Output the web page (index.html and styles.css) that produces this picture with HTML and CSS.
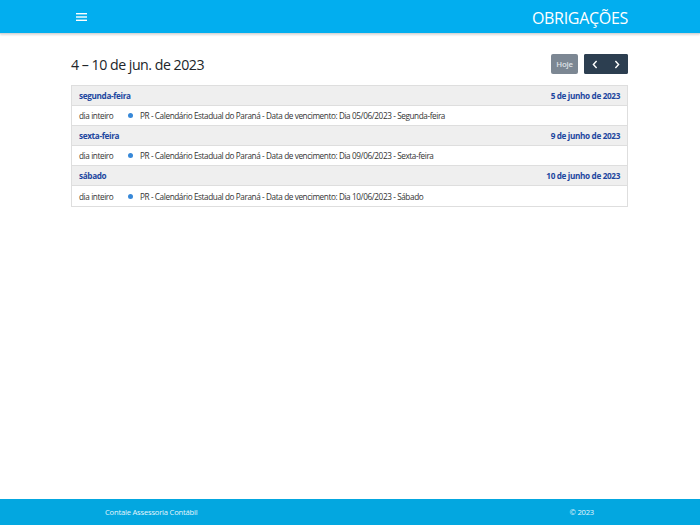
FILE: index.html
```html
<!DOCTYPE html>
<html lang="pt-BR">
<head>
<meta charset="utf-8">
<link rel="stylesheet" href="styles.css">
</head>
<body>
<header class="topbar">
  <div class="topbar-inner">
    <button class="menu-btn" aria-label="menu">
      <svg width="11" height="8" viewBox="0 0 11 8"><rect x="0" y="0" width="11" height="1.4" fill="#fff"/><rect x="0" y="3.3" width="11" height="1.4" fill="#fff"/><rect x="0" y="6.6" width="11" height="1.4" fill="#fff"/></svg>
    </button>
    <div class="brand">OBRIGAÇÕES</div>
  </div>
</header>
<main class="content">
  <div class="toolbar">
    <h2 class="range">4 – 10 de jun. de 2023</h2>
    <div class="actions">
      <button class="btn btn-today">Hoje</button>
      <div class="btn-group">
        <button class="btn btn-nav"><svg width="6" height="9" viewBox="0 0 6 9"><path d="M4.6 1 L1.4 4.5 L4.6 8" fill="none" stroke="#fff" stroke-width="1.4"/></svg></button>
        <button class="btn btn-nav"><svg width="6" height="9" viewBox="0 0 6 9"><path d="M1.4 1 L4.6 4.5 L1.4 8" fill="none" stroke="#fff" stroke-width="1.4"/></svg></button>
      </div>
    </div>
  </div>
  <div class="list">
    <div class="day-row"><span>segunda-feira</span><span>5 de junho de 2023</span></div>
    <div class="event-row"><span class="time">dia inteiro</span><span class="dot"></span><span class="title">PR - Calendário Estadual do Paraná - Data de vencimento: Dia 05/06/2023 - Segunda-feira</span></div>
    <div class="day-row"><span>sexta-feira</span><span>9 de junho de 2023</span></div>
    <div class="event-row"><span class="time">dia inteiro</span><span class="dot"></span><span class="title">PR - Calendário Estadual do Paraná - Data de vencimento: Dia 09/06/2023 - Sexta-feira</span></div>
    <div class="day-row"><span>sábado</span><span>10 de junho de 2023</span></div>
    <div class="event-row"><span class="time">dia inteiro</span><span class="dot"></span><span class="title">PR - Calendário Estadual do Paraná - Data de vencimento: Dia 10/06/2023 - Sábado</span></div>
  </div>
</main>
<footer class="footer">
  <div class="footer-inner">
    <span>Contale Assessoria Contábil</span>
    <span>© 2023</span>
  </div>
</footer>
</body>
</html>
```
FILE: styles.css
```css
* { box-sizing: border-box; }
html, body { margin: 0; padding: 0; height: 100%; }
body {
  font-family: "Open Sans", "Noto Sans", sans-serif;
  color: #212529;
  background: #fff;
  display: flex;
  flex-direction: column;
  min-height: 525px;
}
.topbar {
  background: #02aeef;
  height: 34px;
  border-bottom: 1px solid #d6d6d6;
  box-shadow: 0 1px 2px rgba(0,0,0,0.15);
}
.topbar-inner {
  height: 33px;
  display: flex;
  align-items: center;
  justify-content: space-between;
  padding: 0 72px 0 76px;
}
.menu-btn {
  background: none;
  border: 0;
  padding: 0;
  display: flex;
  align-items: center;
  height: 10px;
}
.brand {
  color: #fff;
  font-size: 16px;
  letter-spacing: -0.3px;
  padding-top: 2px;
}
.content {
  flex: 1;
  padding: 0 72px 0 71px;
}
.toolbar {
  display: flex;
  justify-content: space-between;
  align-items: center;
  margin-top: 20px;
  height: 20px;
  margin-bottom: 11px;
}
.range {
  margin: 0;
  font-weight: 400;
  font-size: 14.2px;
  letter-spacing: -0.5px;
  color: #212529;
}
.actions { display: flex; gap: 6px; }
.btn {
  border: 0;
  height: 20px;
  color: #fff;
  font-family: inherit;
  font-size: 7.8px;
  padding: 0;
  display: flex;
  align-items: center;
  justify-content: center;
}
.btn-today {
  background: #7c8793;
  width: 27px;
  border-radius: 2px;
  font-weight: 600;
  color: #dfe3e7;
  letter-spacing: -0.2px;
}
.btn-group { display: flex; border-radius: 2px; overflow: hidden; background: #2c3e50; }
.btn-nav { background: #2c3e50; width: 22px; }
.list {
  border: 1px solid #dedede;
  font-size: 8.2px;
  letter-spacing: -0.4px;
}
.day-row {
  background: #efefef;
  height: 20px;
  display: flex;
  justify-content: space-between;
  align-items: center;
  padding: 0 7px 0 7px;
  color: #1d47a0;
  font-weight: 700;
  letter-spacing: -0.35px;
  border-bottom: 1px solid #dedede;
}
.event-row {
  height: 20px;
  display: flex;
  align-items: center;
  padding: 0 7px;
  color: #333;
  border-bottom: 1px solid #dedede;
}
.event-row:last-child { border-bottom: 0; }
.time { width: 49px; }
.dot {
  width: 5px; height: 5px; border-radius: 50%;
  background: #3788d8;
  margin-right: 7px;
}
.footer {
  background: #03a7e0;
  height: 26px;
}
.footer-inner {
  height: 26px;
  display: flex;
  align-items: center;
  justify-content: space-between;
  padding: 0 106px 0 105px;
  color: #e6f6fc;
  font-size: 7.6px;
  letter-spacing: -0.2px;
}
```
